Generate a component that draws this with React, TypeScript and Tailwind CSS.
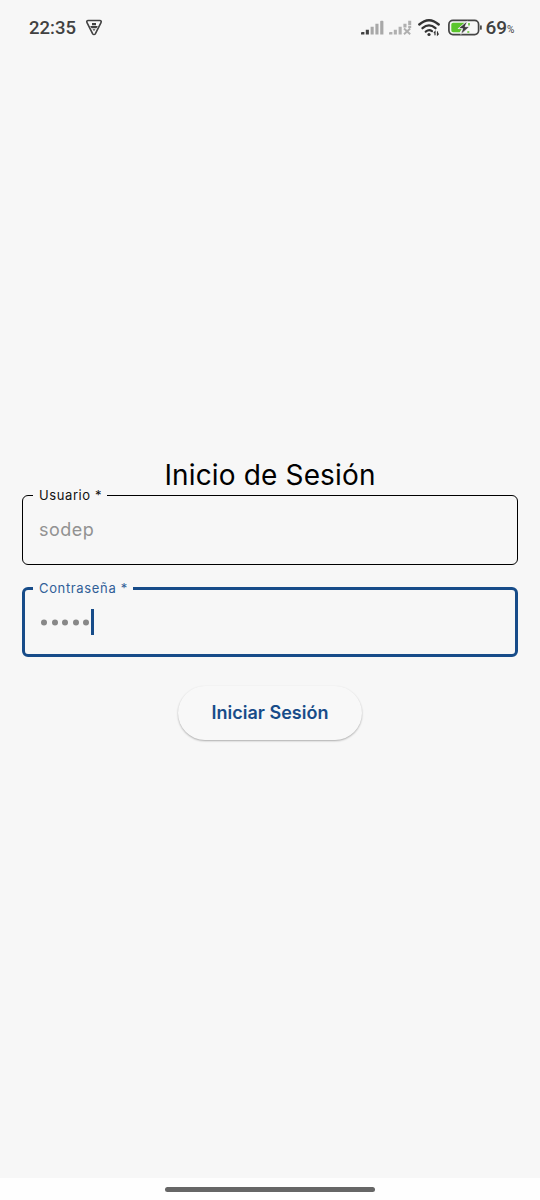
import React from 'react';

function StatusBar() {
  return (
    <header className="flex h-[54px] shrink-0 items-center justify-between pl-[29px] pr-[25px] pt-[1px] text-[#414141]">
      <div className="flex items-center">
        <span className="w-[48px] whitespace-nowrap font-['Roboto',sans-serif] text-[18.5px] leading-6 font-medium">22:35</span>
        <svg className="ml-[8px]" width="18" height="18" viewBox="0 0 18 18" fill="none">
          <path d="M3.200 1.500h11.600c1.300 0 1.800 1 1.200 2.100L10.300 14.800c-.6 1-2 1-2.600 0L2 3.600C1.400 2.500 1.900 1.500 3.200 1.500Z" stroke="currentColor" strokeWidth="1.600" />
          <path d="M7 4h4v2.200H7zM5.200 7h7.600l-1.300 2.200h-5ZM7.500 10.200h3L9 12Z" fill="currentColor" />
        </svg>
      </div>
      <div className="flex items-center">
        <svg width="23" height="16" viewBox="0 0 23 16">
          <path d="M0 14.500v-1.400q0-1 1-1h2.400v2.400ZM4.800 14.500V9.700h3.100v4.800Z" fill="#414141" />
          <path d="M9.600 14.500V6.800h3.100v7.700ZM14.400 14.500V3.800h3.100v10.700ZM19.200 14.500v-13q0-.8.800-.8h1.600q.8 0 .8.800v13Z" fill="#a8a8a8" />
        </svg>
        <svg className="ml-[5px]" width="23" height="16" viewBox="0 0 23 16" fill="#b0b0b0">
          <path d="M0 14.500v-1.400q0-1 1-1h2.400v2.400ZM4.800 14.500V9.700h3.100v4.800ZM9.600 14.500V6.800h3.100v7.700ZM14.400 7.500V3.800h3.100v3.700ZM19.200 5.200V.7h3v4.500ZM19.200 6h3v2h-3Z" />
          <path d="m15 8.600 6.200 5.600M21.200 8.600 15 14.200" stroke="#b0b0b0" strokeWidth="2" />
        </svg>
        <svg className="ml-[4px]" width="26" height="20" viewBox="0 0 26 20" fill="none" stroke="#333" strokeLinecap="round">
          <path d="M3.300 6.500Q13 -2.200 22.700 6.500" strokeWidth="2.400" />
          <path d="M6.500 10.200q6.500-5.600 13 0" strokeWidth="2.300" />
          <path d="M9.700 13.600q3.300-2.500 6.300-.4" strokeWidth="2.200" />
          <circle cx="13" cy="16.500" r="1.600" fill="#333" stroke="none" />
          <path d="M19 16.800v-3l-.8.800M21.500 13.800v3l.8-.8" strokeWidth="1.200" />
        </svg>
        <svg className="ml-[5px]" width="36" height="18" viewBox="0 0 36 18">
          <rect x="1.900" y="1.400" width="29.700" height="14.200" rx="4" fill="none" stroke="#444" strokeWidth="1.700" />
          <path d="M6.100 3.800h11.600L10.500 10h4.200l-2 3.300H6.100q-1.800 0-1.800-1.800V5.600q0-1.800 1.800-1.800Z" fill="#5bc52d" />
          <path d="M22 4v2.600M20.300 13h2" stroke="#5bc52d" strokeWidth="1.600" />
          <path d="M20.300 2 11.200 9.600h4.500L13.800 15.400 22.500 7.700h-4.400Z" fill="#3c3c3c" stroke="#f7f7f7" strokeWidth=".7" />
          <path d="M33.900 7v3" stroke="#444" strokeWidth="1.700" strokeLinecap="round" />
        </svg>
        <span className="ml-[2px] font-['Roboto',sans-serif] text-[19px] leading-6 font-medium">69</span>
        <span className="w-[8px] pt-[5px] font-['Roboto',sans-serif] text-[10px] leading-3">%</span>
      </div>
    </header>
  );
}

export default function App() {
  return (
    <div className="flex h-[1200px] w-[540px] flex-col overflow-hidden bg-[#f7f7f7] font-['Inter',sans-serif]">
      <StatusBar />
      <main className="flex flex-1 flex-col items-center pt-[402px]">
        <h1 className="h-[31px] whitespace-nowrap text-[28px] leading-[38px] tracking-[0.15px] text-black">Inicio de Sesión</h1>
        <fieldset className="h-[78px] w-[496px] shrink-0 rounded-[6px] border border-black px-[10px]">
          <legend className="h-[16px] pl-[6px] pr-[5px] text-[13px] leading-[16px] tracking-[0.6px] text-[#111]">Usuario *</legend>
          <div className="flex h-[52px] items-center px-[6px] text-[18px] tracking-[0.5px] text-[#929292]">sodep</div>
        </fieldset>
        <fieldset className="mt-[15px] h-[77px] w-[496px] shrink-0 rounded-[6px] border-[3px] border-[#174c89] px-[8px]">
          <legend className="h-[16px] pl-[6px] pr-[5px] text-[13px] leading-[16px] tracking-[0.65px] text-[#315f98]">Contraseña *</legend>
          <div className="flex h-[52px] items-center px-[8px]">
            <div className="flex gap-[4.600px]">
              {[0, 1, 2, 3, 4].map((dot) => (
                <span key={dot} className="size-[6px] translate-y-[0.5px] rounded-full bg-[#888]" />
              ))}
            </div>
            <span className="ml-[2px] h-[26px] w-[3px] bg-[#174c89]" />
          </div>
        </fieldset>
        <button className="mt-[29px] h-[54px] w-[184px] shrink-0 rounded-[27px] bg-[#f8f8f8] text-[18px] leading-[22px] font-semibold text-[#174c89] shadow-[0_1px_2px_rgba(0,0,0,0.3)]">Iniciar Sesión</button>
      </main>
      <footer className="flex h-[22px] shrink-0 items-center justify-center bg-[#fefefe]">
        <div className="h-[5px] w-[210px] rounded-full bg-[#666]" />
      </footer>
    </div>
  );
}
